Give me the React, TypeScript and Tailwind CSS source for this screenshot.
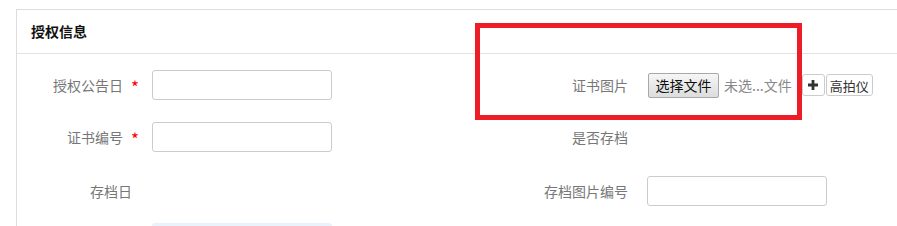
import React from 'react';

const font = { fontFamily: '"Microsoft YaHei", "Noto Sans CJK SC", "Noto Sans", sans-serif' };

function Star() {
  return <span className="ml-[8px] mt-[3px] text-[17px] leading-none text-[#ff0000]">*</span>;
}

function TextInput() {
  return (
    <input
      type="text"
      className="h-[30px] w-[180px] rounded-[3px] border border-[#cccccc] bg-white px-2 text-[14px] outline-none"
    />
  );
}

export default function App() {
  return (
    <div className="relative h-[226px] w-[897px] overflow-hidden bg-white text-[14px]" style={font}>
      <div className="ml-[16px] mt-[9px] w-[900px] border-l border-t border-[#dddddd]">
        <div className="flex h-[44px] items-center border-b border-[#e2e2e2] px-[14px]">
          <h2 className="text-[14px] font-bold text-[#111111]">授权信息</h2>
        </div>

        <div className="flex flex-col pt-[16px]">
          {/* row 1 */}
          <div className="flex h-[30px] items-center">
            <div className="flex w-[441px] items-center">
              <label className="flex w-[122px] items-center justify-end text-[#777777]">
                授权公告日
                <Star />
              </label>
              <div className="ml-[13px]">
                <TextInput />
              </div>
            </div>
            <div className="flex items-center">
              <label className="w-[170px] text-right text-[#777777]">证书图片</label>
              <div className="ml-[20px] flex items-center">
                <button className="h-[25px] w-[71px] rounded-[2px] border border-[#a8a8a8] bg-gradient-to-b from-[#f6f6f6] to-[#dddddd] text-[14px] leading-none text-[#111111]">
                  选择文件
                </button>
                <span className="ml-[5px] text-[#888888]">未选...文件</span>
                <button className="ml-[10px] flex h-[22px] w-[23px] items-center justify-center rounded-[3px] border border-[#cccccc] bg-white">
                  <svg width="10" height="10" viewBox="0 0 10 10">
                    <path d="M3.6 0h2.8v3.6H10v2.8H6.4V10H3.6V6.4H0V3.6h3.6z" fill="#333333" />
                  </svg>
                </button>
                <button className="ml-[1px] h-[22px] w-[47px] rounded-[3px] border border-[#cccccc] bg-white text-[13px] font-normal leading-none text-[#333333]">
                  高拍仪
                </button>
              </div>
            </div>
          </div>

          {/* row 2 */}
          <div className="mt-[22px] flex h-[30px] items-center">
            <div className="flex w-[441px] items-center">
              <label className="flex w-[122px] items-center justify-end text-[#777777]">
                证书编号
                <Star />
              </label>
              <div className="ml-[13px]">
                <TextInput />
              </div>
            </div>
            <div className="flex items-center">
              <label className="w-[170px] text-right text-[#777777]">是否存档</label>
            </div>
          </div>

          {/* row 3 */}
          <div className="mt-[24px] flex h-[30px] items-center">
            <div className="flex w-[441px] items-center">
              <label className="w-[122px] pr-[7px] text-right text-[#777777]">存档日</label>
            </div>
            <div className="flex items-center">
              <label className="w-[170px] text-right text-[#777777]">存档图片编号</label>
              <div className="ml-[19px]">
                <TextInput />
              </div>
            </div>
          </div>

          {/* row 4 (cut off) */}
          <div className="mt-[17px] flex">
            <div className="ml-[135px] h-[30px] w-[180px] rounded-[3px] bg-gradient-to-b from-[#e8f1fb] to-white" />
          </div>
        </div>
      </div>

      {/* annotation box */}
      <div className="pointer-events-none absolute left-[475px] top-[23px] h-[97px] w-[327px] border-[5px] border-[#ee1c25]" />
    </div>
  );
}
